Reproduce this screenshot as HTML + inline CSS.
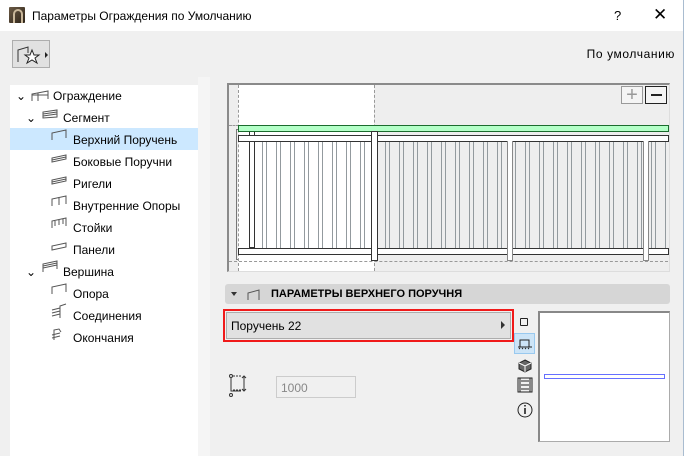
<!DOCTYPE html>
<html><head><meta charset="utf-8"><style>
*{margin:0;padding:0;box-sizing:border-box}
body{width:684px;height:456px;overflow:hidden;background:#f0f0f0;font-family:"Liberation Sans","DejaVu Sans",sans-serif;font-size:12px;color:#000;position:relative}
.a{position:absolute}
.tree div{position:absolute;left:0;height:22px;line-height:22px;white-space:nowrap}
.bal{background:repeating-linear-gradient(90deg,#939a9e 0 1px,transparent 1px 4px,#939a9e 4px 5px,transparent 5px 14px)}
</style></head><body>
<div class="a" style="left:0;top:0;width:684px;height:31px;background:#fff;border-right:1px solid #a9bcd0"></div>
<div class="a" style="left:9px;top:7px;width:16px;height:16px;background:linear-gradient(135deg,#6b5a45,#2e2418);border-radius:1px"></div>
<div class="a" style="left:13px;top:9px;width:10px;height:14px;border:2px solid #c9b79a;border-bottom:none;border-radius:8px 8px 0 0"></div>
<div class="a" style="left:32px;top:9px;font-size:12px">Параметры Ограждения по Умолчанию</div>
<div class="a" style="left:614px;top:8px;font-size:13px">?</div>
<div class="a" style="left:653px;top:5px;font-size:17px;font-weight:300">✕</div>
<div class="a" style="left:0;top:31px;width:684px;height:425px;border-right:1px solid #a9bcd0"></div>
<div class="a" style="left:12px;top:40px;width:38px;height:28px;border:1px solid #adadad;background:#e1e1e1"></div>
<svg class="a" style="left:16px;top:44px" width="34" height="22"><path d="M2 18V6l10-3v6" fill="none" stroke="#333"/><path d="M16 6l2 5h5l-4 3 2 5-5-3-5 3 2-5-4-3h5z" fill="#fff" stroke="#222"/><path d="M29 8l3 3-3 3z" fill="#222"/></svg>
<div class="a" style="right:9px;top:47px;letter-spacing:0.6px">По умолчанию</div>
<div class="a" style="left:10px;top:85px;width:188px;height:371px;background:#fff"></div>
<div class="a" style="left:198px;top:77px;width:12px;height:379px;background:#f5f5f5"></div>
<div class="a" style="left:10px;top:128px;width:188px;height:22px;background:#cce8ff"></div>
<div class="tree a" style="left:0;top:85px;width:200px">
<div style="top:0;left:16px">⌄</div><div style="top:0;left:53px">Ограждение</div>
<div style="top:22px;left:26px">⌄</div><div style="top:22px;left:63px">Сегмент</div>
<div style="top:44px;left:73px">Верхний Поручень</div>
<div style="top:66px;left:73px">Боковые Поручни</div>
<div style="top:88px;left:73px">Ригели</div>
<div style="top:110px;left:73px">Внутренние Опоры</div>
<div style="top:132px;left:73px">Стойки</div>
<div style="top:154px;left:73px">Панели</div>
<div style="top:176px;left:26px">⌄</div><div style="top:176px;left:63px">Вершина</div>
<div style="top:198px;left:73px">Опора</div>
<div style="top:220px;left:73px">Соединения</div>
<div style="top:242px;left:73px">Окончания</div>
</div>
<svg class="a" style="left:28px;top:88px" width="180" height="260" fill="none" stroke="#555" stroke-width="1">
<path d="M4 13V6l16-3v8M10 13V5M4 7h16"/>
<path d="M15 30V24l14-2v7zM15 26l14-2M15 28l14-2"/>
<path d="M24 52V45l14-3v8"/>
<path d="M24 74l14-3v-4l-14 3zM24 72l14-3"/>
<path d="M24 96l14-3v-4l-14 3zM24 94l14-3"/>
<path d="M24 118v-7l14-3v8M31 117v-8"/>
<path d="M24 140v-7l14-3v8M27 138v-5M31 137v-5M35 136v-5"/>
<path d="M24 162v-4l14-3v4z"/>
<path d="M15 184v-8l14-3v8M15 178l14-3M15 180l14-3"/>
<path d="M24 206v-7l14-3v8"/>
<path d="M24 228l8-2M24 225l8-2M24 222l8-2M32 230v-12l6-2"/>
<path d="M24 250l8-2M24 247l8-2M26 252v-10l5-1 2 3"/>
</svg>
<div class="a" style="left:227px;top:83px;width:443px;height:189px;border:2px solid #8a8a8a;border-right:1px solid #ddd;border-bottom:1px solid #ddd;background:#eeeeee"></div>
<div class="a" style="left:238px;top:85px;width:136px;height:186px;background:#fff"></div>
<div class="a bal" style="left:262px;top:141px;width:110px;height:107px"></div>
<div class="a bal" style="left:385px;top:141px;width:282px;height:107px"></div>
<div class="a" style="left:249px;top:131px;width:6px;height:117px;border:1px solid #333"></div>
<div class="a" style="left:236px;top:129px;width:3px;height:131px;border:1px solid #777;border-right:none"></div>
<div class="a" style="left:238px;top:85px;height:186px;border-left:1px dashed #999"></div>
<div class="a" style="left:374px;top:85px;height:186px;border-left:1px dashed #999"></div>
<div class="a" style="left:229px;top:261px;width:439px;border-top:1px dashed #999"></div>
<div class="a" style="left:229px;top:125px;width:10px;border-top:1px dashed #999"></div>
<div class="a" style="left:238px;top:125px;width:431px;height:7px;background:#b3ffc7;border:1px solid #1b6b2d"></div>
<div class="a" style="left:238px;top:135px;width:431px;height:7px;background:#fff;border:1px solid #333"></div>
<div class="a" style="left:238px;top:248px;width:431px;height:7px;background:#fff;border:1px solid #333"></div>
<div class="a" style="left:371px;top:131px;width:7px;height:130px;background:#fff;border:1px solid #333"></div>
<div class="a" style="left:507px;top:141px;width:6px;height:120px;background:#fff;border:1px solid #888;border-top:none"></div>
<div class="a" style="left:643px;top:141px;width:6px;height:120px;background:#fff;border:1px solid #888;border-top:none"></div>
<div class="a" style="left:621px;top:86px;width:22px;height:18px;border:1px solid #999;background:#f4f4f4;color:#999;font-size:20px;line-height:16px;text-align:center">+</div>
<div class="a" style="left:645px;top:86px;width:22px;height:18px;border:1px solid #222;background:#f4f4f4"><div style="position:absolute;left:5px;top:7px;width:11px;height:2px;background:#222"></div></div>
<div class="a" style="left:225px;top:284px;width:445px;height:20px;background:#d6d6d6;border-radius:3px"></div>
<svg class="a" style="left:230px;top:286px" width="34" height="16"><path d="M1 6h6l-3 4z" fill="#333"/><path d="M18 14V7l11-3v10" fill="none" stroke="#555"/></svg>
<div class="a" style="left:271px;top:288px;font-size:11px;font-weight:bold">ПАРАМЕТРЫ ВЕРХНЕГО ПОРУЧНЯ</div>
<div class="a" style="left:223px;top:309px;width:291px;height:33px;border:2px solid #f01a1a"></div>
<div class="a" style="left:226px;top:312px;width:285px;height:27px;background:#e1e1e1;border:1px solid #adadad"></div>
<div class="a" style="left:231px;top:319px">Поручень 22</div>
<svg class="a" style="left:500px;top:320px" width="6" height="10"><path d="M1 1l4 4-4 4z" fill="#333"/></svg>
<div class="a" style="left:520px;top:318px;width:8px;height:8px;border:1.5px solid #222;border-radius:1px"></div>
<div class="a" style="left:514px;top:333px;width:21px;height:21px;background:#cce4f7;border:1px solid #99c9ef"></div>
<svg class="a" style="left:514px;top:333px" width="22" height="90" fill="none" stroke="#222">
<path d="M6 14V7h9v7M4 14h14M5 16l1-1M8 16l1-1M11 16l1-1M14 16l1-1"/>
<path d="M11 27l6 3v6l-6 3-6-3v-6z" fill="#666"/><path d="M5 30l6 3 6-3M11 33v6" stroke="#fff"/>
<path d="M4 45h14v14H4zM7 48h8M7 52h8M7 56h8M4 45v14M6 45v14M16 45v14"/>
<circle cx="11" cy="77" r="7"/><path d="M11 75v6M11 72v1.5" stroke-width="1.6"/>
</svg>
<div class="a" style="left:538px;top:311px;width:132px;height:131px;background:#fff;border:1px solid #ababab;border-top:2px solid #888;border-left:2px solid #888"></div>
<div class="a" style="left:544px;top:374px;width:121px;height:5px;border:1px solid #6670ff"></div>
<svg class="a" style="left:227px;top:373px" width="24" height="28" fill="none" stroke="#333"><circle cx="4" cy="3" r="1.5"/><path d="M4 5v13h10"/><path d="M6 3h8M6 17h8" stroke-dasharray="2 1"/><path d="M17 3v15M15 5l2-2 2 2M15 16l2 2 2-2"/><circle cx="4" cy="22" r="1.5"/></svg>
<div class="a" style="left:276px;top:376px;width:80px;height:22px;border:1px solid #ccc;background:#f0f0f0;color:#888;padding:4px 0 0 4px">1000</div>
</body></html>
